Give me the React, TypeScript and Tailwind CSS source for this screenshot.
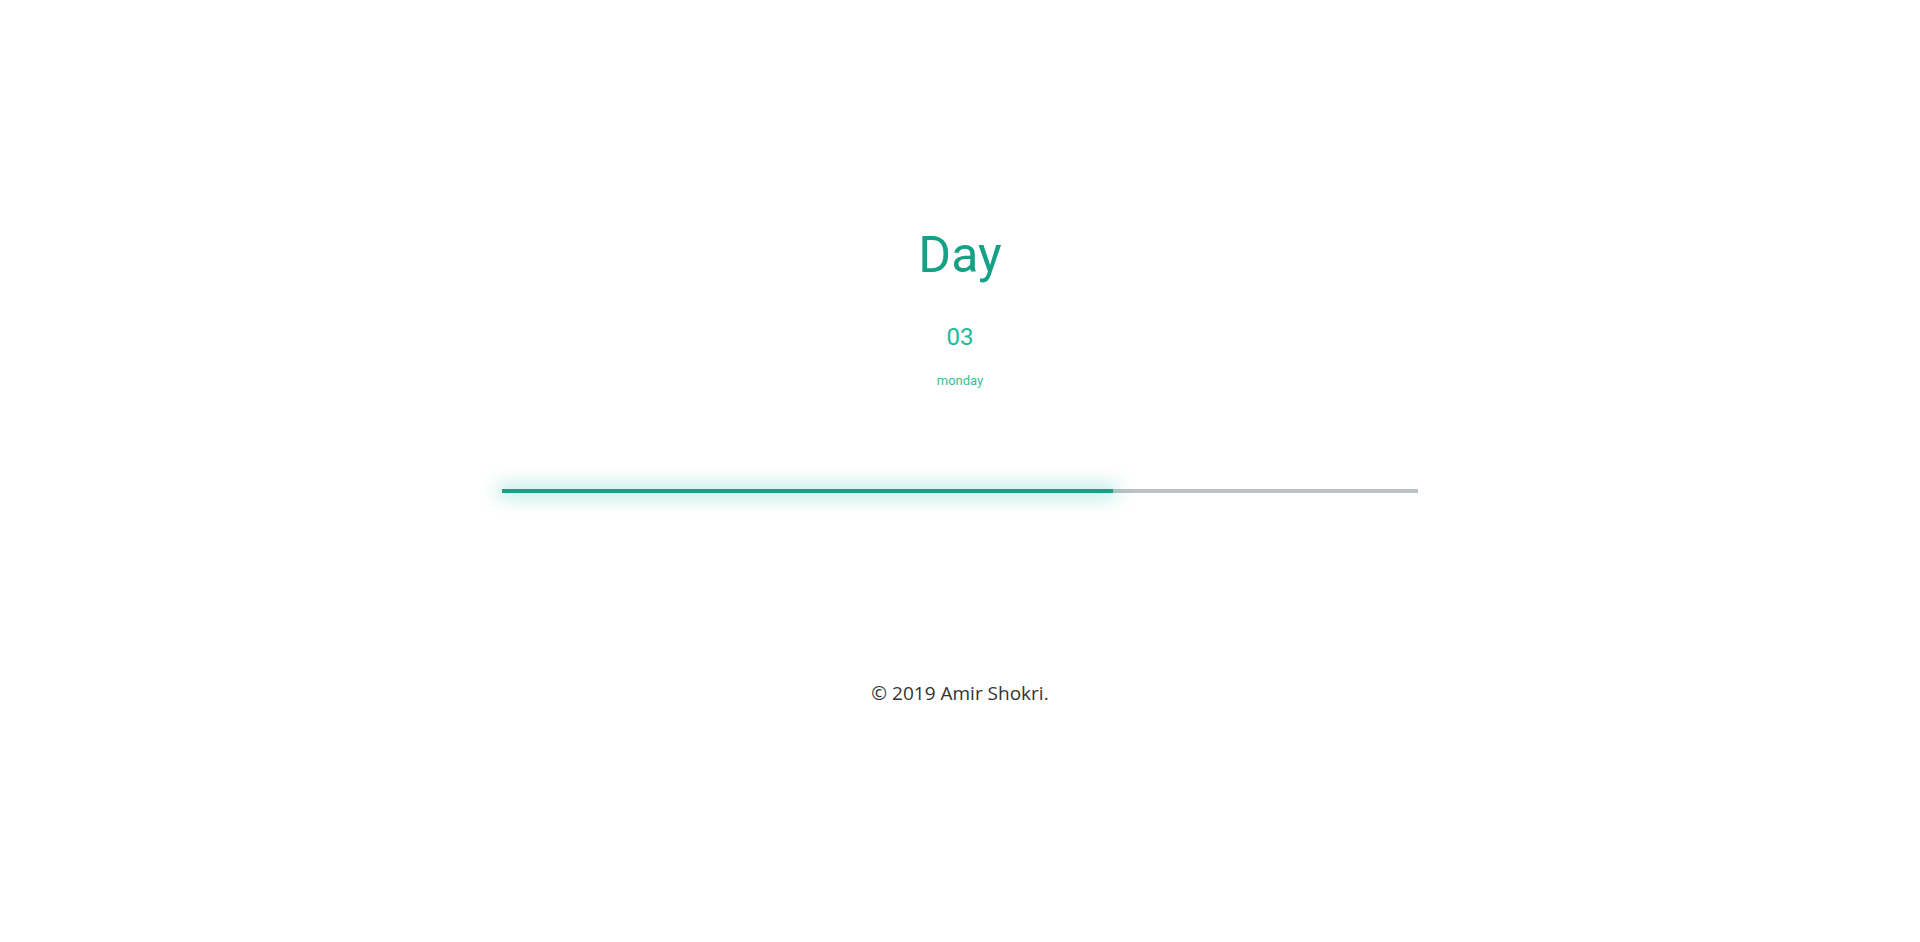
export default function App() {
  return (
    <div className="min-h-[942px] w-full bg-white flex flex-col items-center font-['Roboto','Liberation_Sans',sans-serif]">
      <div className="h-[225px]" />
      <h1 className="text-[50px] leading-[60px] text-[#16a085] font-normal">Day</h1>
      <div className="mt-[34px] text-[24px] leading-[36px] text-[#1abc9c]">03</div>
      <div className="mt-[16px] text-[13px] leading-[20px] text-[#3dbd96]">monday</div>
      <div className="mt-[98px] w-[916px] h-[4px] bg-[#bcc1c5] flex">
        <div className="h-full w-[611px] bg-[#16a085] shadow-[0_0_18px_4px_rgba(26,188,156,0.35)]" />
      </div>
      <div className="mt-[186px] text-[19px] leading-[28px] text-[#333333] font-['Open_Sans','Liberation_Sans',sans-serif]">© 2019 Amir Shokri.</div>
    </div>
  );
}
